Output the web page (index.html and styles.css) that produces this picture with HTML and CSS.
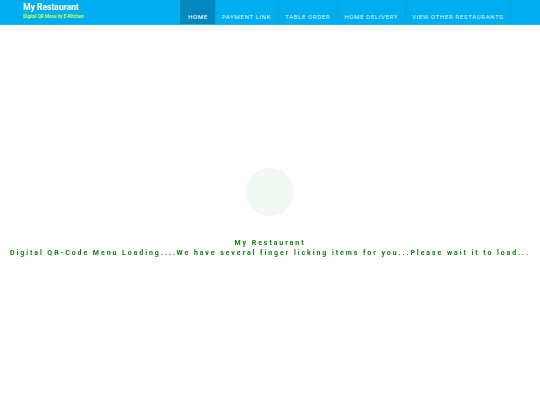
FILE: index.html
```
<!DOCTYPE html>
<html lang="en">
<head>
<meta charset="utf-8">
<title>My Restaurant</title>
<link rel="stylesheet" href="styles.css">
</head>
<body>
<header class="topbar">
  <div class="brand">
    <div class="brand-name">My Restaurant</div>
    <div class="brand-tag">Digital QR Menu by E-Kitchen</div>
  </div>
  <nav class="nav">
    <a class="nav-item active">HOME</a>
    <a class="nav-item">PAYMENT LINK</a>
    <a class="nav-item">TABLE ORDER</a>
    <a class="nav-item">HOME DELIVERY</a>
    <a class="nav-item">VIEW OTHER RESTAURANTS</a>
  </nav>
</header>
<main class="loader">
  <div class="spinner"></div>
  <p class="load-title">My Restaurant</p>
  <p class="load-text">Digital QR-Code Menu Loading....We have several finger licking items for you...Please wait it to load...</p>
</main>
</body>
</html>
```
FILE: styles.css
```
* { box-sizing: border-box; }
html, body { margin: 0; padding: 0; background: #fff; }
body { width: 540px; height: 405px; overflow: hidden; font-family: Roboto, sans-serif; }
.topbar {
  display: flex;
  height: 25px;
  background: #00aeef;
  border-bottom: 1px solid #10b8f5;
  transform: translateZ(0);
}
.brand { width: 180px; padding: 2px 0 0 23px; flex: none; }
.brand-name { font-size: 8.5px; font-weight: 700; line-height: 11px; color: #fff; }
.brand-tag { font-size: 4.6px; font-weight: 700; line-height: 5px; margin-top: 1px; color: #c6ff3c; white-space: nowrap; }
.nav { display: flex; height: 24px; border-right: 1px solid #0a9fdc; }
.nav-item {
  display: flex;
  align-items: center;
  padding: 9px 7px 0 6px;
  font-size: 6.2px;
  font-weight: 400;
  letter-spacing: 0.55px;
  white-space: nowrap;
  color: #d8f3fd;
  border-left: 1px solid #0a9fdc;
}
.nav-item.active { background: #0087bd; color: #e8f6fb; border-left: 0; font-weight: 500; padding: 9px 7px 0 8px; }
.loader { display: flex; flex-direction: column; align-items: center; transform: translateZ(0); }
.spinner { width: 48px; height: 48px; margin-top: 143px; border-radius: 50%; background: #f1f8f2; }
.load-title, .load-text {
  margin: 0;
  font-family: Roboto, sans-serif;
  font-size: 7px;
  font-weight: 700;
  line-height: 10px;
  letter-spacing: 1.93px;
  color: #0f7d0f;
  white-space: nowrap;
}
.load-title { margin-top: 22px; }
```
